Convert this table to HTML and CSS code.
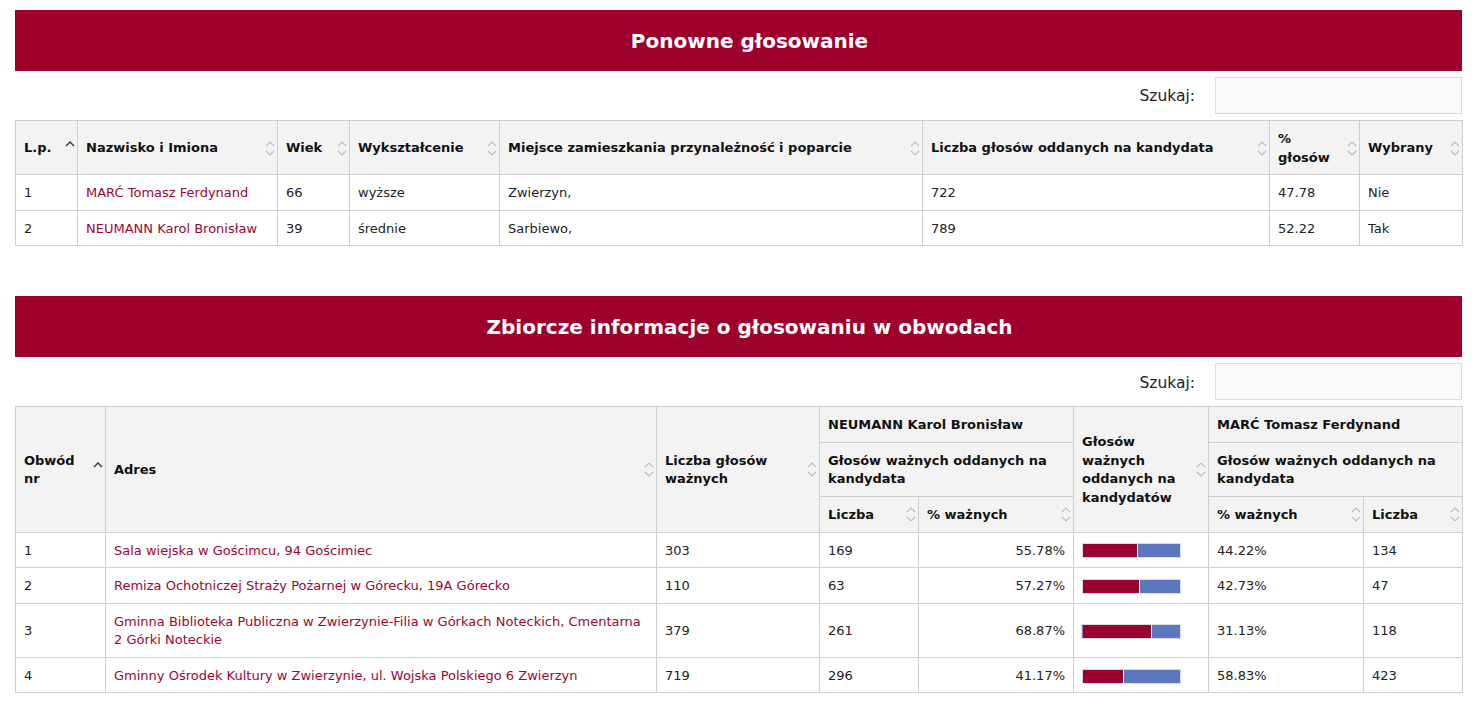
FILE: index.html
```html
<!DOCTYPE html>
<html lang="pl">
<head>
<meta charset="utf-8">
<title>Wyniki</title>
<link rel="stylesheet" href="styles.css">
</head>
<body>
<div class="page">

  <section class="block">
    <h2 class="title">Ponowne głosowanie</h2>
    <div class="search"><label class="search-label">Szukaj:</label><input class="search-input" type="text"></div>
    <table class="grid t1">
      <colgroup>
        <col class="c-lp"><col class="c-name"><col class="c-age"><col class="c-edu"><col class="c-place"><col class="c-votes"><col class="c-pct"><col class="c-sel">
      </colgroup>
      <thead>
        <tr>
          <th class="sortable">L.p.<svg class="sort" viewBox="0 0 10 15" width="10" height="15"><path class="act" d="M1 5 L5 1 L9 5"/></svg></th>
          <th class="sortable">Nazwisko i Imiona<svg class="sort" viewBox="0 0 10 15" width="10" height="15"><path d="M1 5 L5 1 L9 5"/><path d="M1 10 L5 14 L9 10"/></svg></th>
          <th class="sortable">Wiek<svg class="sort" viewBox="0 0 10 15" width="10" height="15"><path d="M1 5 L5 1 L9 5"/><path d="M1 10 L5 14 L9 10"/></svg></th>
          <th class="sortable">Wykształcenie<svg class="sort" viewBox="0 0 10 15" width="10" height="15"><path d="M1 5 L5 1 L9 5"/><path d="M1 10 L5 14 L9 10"/></svg></th>
          <th class="sortable">Miejsce zamieszkania przynależność i poparcie<svg class="sort" viewBox="0 0 10 15" width="10" height="15"><path d="M1 5 L5 1 L9 5"/><path d="M1 10 L5 14 L9 10"/></svg></th>
          <th class="sortable">Liczba głosów oddanych na kandydata<svg class="sort" viewBox="0 0 10 15" width="10" height="15"><path d="M1 5 L5 1 L9 5"/><path d="M1 10 L5 14 L9 10"/></svg></th>
          <th class="sortable">% głosów<svg class="sort" viewBox="0 0 10 15" width="10" height="15"><path d="M1 5 L5 1 L9 5"/><path d="M1 10 L5 14 L9 10"/></svg></th>
          <th class="sortable">Wybrany<svg class="sort" viewBox="0 0 10 15" width="10" height="15"><path d="M1 5 L5 1 L9 5"/><path d="M1 10 L5 14 L9 10"/></svg></th>
        </tr>
      </thead>
      <tbody>
        <tr><td>1</td><td><a href="#">MARĆ Tomasz Ferdynand</a></td><td>66</td><td>wyższe</td><td>Zwierzyn,</td><td>722</td><td>47.78</td><td>Nie</td></tr>
        <tr><td>2</td><td><a href="#">NEUMANN Karol Bronisław</a></td><td>39</td><td>średnie</td><td>Sarbiewo,</td><td>789</td><td>52.22</td><td>Tak</td></tr>
      </tbody>
    </table>
  </section>

  <section class="block second">
    <h2 class="title">Zbiorcze informacje o głosowaniu w obwodach</h2>
    <div class="search"><label class="search-label">Szukaj:</label><input class="search-input" type="text"></div>
    <table class="grid t2">
      <colgroup>
        <col class="d-nr"><col class="d-addr"><col class="d-valid"><col class="d-n1"><col class="d-p1"><col class="d-bar"><col class="d-p2"><col class="d-n2">
      </colgroup>
      <thead>
        <tr>
          <th rowspan="3" class="sortable">Obwód nr<svg class="sort" viewBox="0 0 10 15" width="10" height="15"><path class="act" d="M1 5 L5 1 L9 5"/></svg></th>
          <th rowspan="3" class="sortable">Adres<svg class="sort" viewBox="0 0 10 15" width="10" height="15"><path d="M1 5 L5 1 L9 5"/><path d="M1 10 L5 14 L9 10"/></svg></th>
          <th rowspan="3" class="sortable">Liczba głosów ważnych<svg class="sort" viewBox="0 0 10 15" width="10" height="15"><path d="M1 5 L5 1 L9 5"/><path d="M1 10 L5 14 L9 10"/></svg></th>
          <th colspan="2">NEUMANN Karol Bronisław</th>
          <th rowspan="3" class="sortable">Głosów ważnych oddanych na kandydatów<svg class="sort" viewBox="0 0 10 15" width="10" height="15"><path d="M1 5 L5 1 L9 5"/><path d="M1 10 L5 14 L9 10"/></svg></th>
          <th colspan="2">MARĆ Tomasz Ferdynand</th>
        </tr>
        <tr>
          <th colspan="2">Głosów ważnych oddanych na kandydata</th>
          <th colspan="2">Głosów ważnych oddanych na kandydata</th>
        </tr>
        <tr>
          <th class="sortable">Liczba<svg class="sort" viewBox="0 0 10 15" width="10" height="15"><path d="M1 5 L5 1 L9 5"/><path d="M1 10 L5 14 L9 10"/></svg></th>
          <th class="sortable">% ważnych<svg class="sort" viewBox="0 0 10 15" width="10" height="15"><path d="M1 5 L5 1 L9 5"/><path d="M1 10 L5 14 L9 10"/></svg></th>
          <th class="sortable">% ważnych<svg class="sort" viewBox="0 0 10 15" width="10" height="15"><path d="M1 5 L5 1 L9 5"/><path d="M1 10 L5 14 L9 10"/></svg></th>
          <th class="sortable">Liczba<svg class="sort" viewBox="0 0 10 15" width="10" height="15"><path d="M1 5 L5 1 L9 5"/><path d="M1 10 L5 14 L9 10"/></svg></th>
        </tr>
      </thead>
      <tbody>
        <tr>
          <td>1</td><td><a href="#">Sala wiejska w Gościmcu, 94 Gościmiec</a></td><td>303</td><td>169</td><td class="num">55.78%</td>
          <td><div class="bar"><span class="seg red" style="width:55.78%"></span><span class="seg blue"></span></div></td>
          <td>44.22%</td><td>134</td>
        </tr>
        <tr>
          <td>2</td><td><a href="#">Remiza Ochotniczej Straży Pożarnej w Górecku, 19A Górecko</a></td><td>110</td><td>63</td><td class="num">57.27%</td>
          <td><div class="bar"><span class="seg red" style="width:57.27%"></span><span class="seg blue"></span></div></td>
          <td>42.73%</td><td>47</td>
        </tr>
        <tr>
          <td>3</td><td><a href="#">Gminna Biblioteka Publiczna w Zwierzynie-Filia w Górkach Noteckich, Cmentarna 2 Górki Noteckie</a></td><td>379</td><td>261</td><td class="num">68.87%</td>
          <td><div class="bar wide"><span class="seg sliver"></span><span class="seg red" style="width:68.87%"></span><span class="seg blue"></span></div></td>
          <td>31.13%</td><td>118</td>
        </tr>
        <tr>
          <td>4</td><td><a href="#">Gminny Ośrodek Kultury w Zwierzynie, ul. Wojska Polskiego 6 Zwierzyn</a></td><td>719</td><td>296</td><td class="num">41.17%</td>
          <td><div class="bar"><span class="seg red" style="width:41.17%"></span><span class="seg blue"></span></div></td>
          <td>58.83%</td><td>423</td>
        </tr>
      </tbody>
    </table>
  </section>

</div>
</body>
</html>
```

FILE: styles.css
```css
html, body {
  margin: 0;
  padding: 0;
  background: #ffffff;
}

body {
  font-family: "DejaVu Sans", Verdana, sans-serif;
  font-size: 13px;
  line-height: 1.42857;
  color: #222222;
}

.page {
  width: 1447px;
  padding: 10px 0 0 15px;
}

.block.second {
  margin-top: 50px;
}

.title {
  margin: 0;
  background: #9e002d;
  color: #ffffff;
  font-size: 20px;
  font-weight: bold;
  line-height: 23px;
  text-align: center;
  padding: 20px 0 18px 22px;
  height: 23px;
}

.search {
  display: flex;
  justify-content: flex-end;
  align-items: center;
  gap: 20px;
  margin: 6px 0 6px 0;
}

.search-label {
  font-size: 15.5px;
  color: #222222;
  position: relative;
  top: 1px;
}

.search-input {
  box-sizing: border-box;
  width: 247px;
  height: 37px;
  margin: 0;
  border: 1px solid #dddddd;
  background: #fafafa;
  font-family: inherit;
  font-size: 13px;
  padding: 4px 8px;
}

.grid {
  border-collapse: collapse;
  table-layout: fixed;
  width: 1447px;
}

.grid th,
.grid td {
  border: 1px solid #cfcfcf;
  padding: 9px 8px 7px 8px;
  text-align: left;
  vertical-align: middle;
}

.grid th {
  background: #f3f3f3;
  font-weight: bold;
  color: #111111;
  position: relative;
}

.grid th.sortable {
  padding-right: 24px;
}

.grid td {
  color: #222222;
}

.grid td.num {
  text-align: right;
}

.grid a {
  color: #a0052f;
  text-decoration: none;
}

.sort {
  position: absolute;
  right: 2px;
  top: 50%;
  margin-top: -7px;
  fill: none;
  stroke: #bdbdbd;
  stroke-width: 1.1;
}

.sort .act {
  stroke: #333333;
  stroke-width: 1.4;
}

/* table 1 columns */
.c-lp { width: 62px; }
.c-name { width: 200px; }
.c-age { width: 72px; }
.c-edu { width: 150px; }
.c-place { width: 423px; }
.c-votes { width: 347px; }
.c-pct { width: 90px; }
.c-sel { width: 103px; }

/* table 2 columns */
.d-nr { width: 90px; }
.d-addr { width: 551px; }
.d-valid { width: 163px; }
.d-n1 { width: 99px; }
.d-p1 { width: 155px; }
.d-bar { width: 135px; }
.d-p2 { width: 155px; }
.d-n2 { width: 99px; }

.bar {
  display: flex;
  width: 97px;
  height: 13px;
  border: 1px solid #dcdcdc;
  margin-left: 0;
  gap: 1px;
  background: #ffffff;
}

.bar.wide {
  margin-left: -1px;
  width: 98px;
}

.seg {
  display: block;
  height: 100%;
}

.seg.red {
  background: #9c002c;
  flex: none;
}

.seg.blue {
  background: #5a77bf;
  flex: 1 1 auto;
}

.seg.sliver {
  width: 1px;
  background: #7d86c6;
  flex: none;
  margin-right: -1px;
}
```
